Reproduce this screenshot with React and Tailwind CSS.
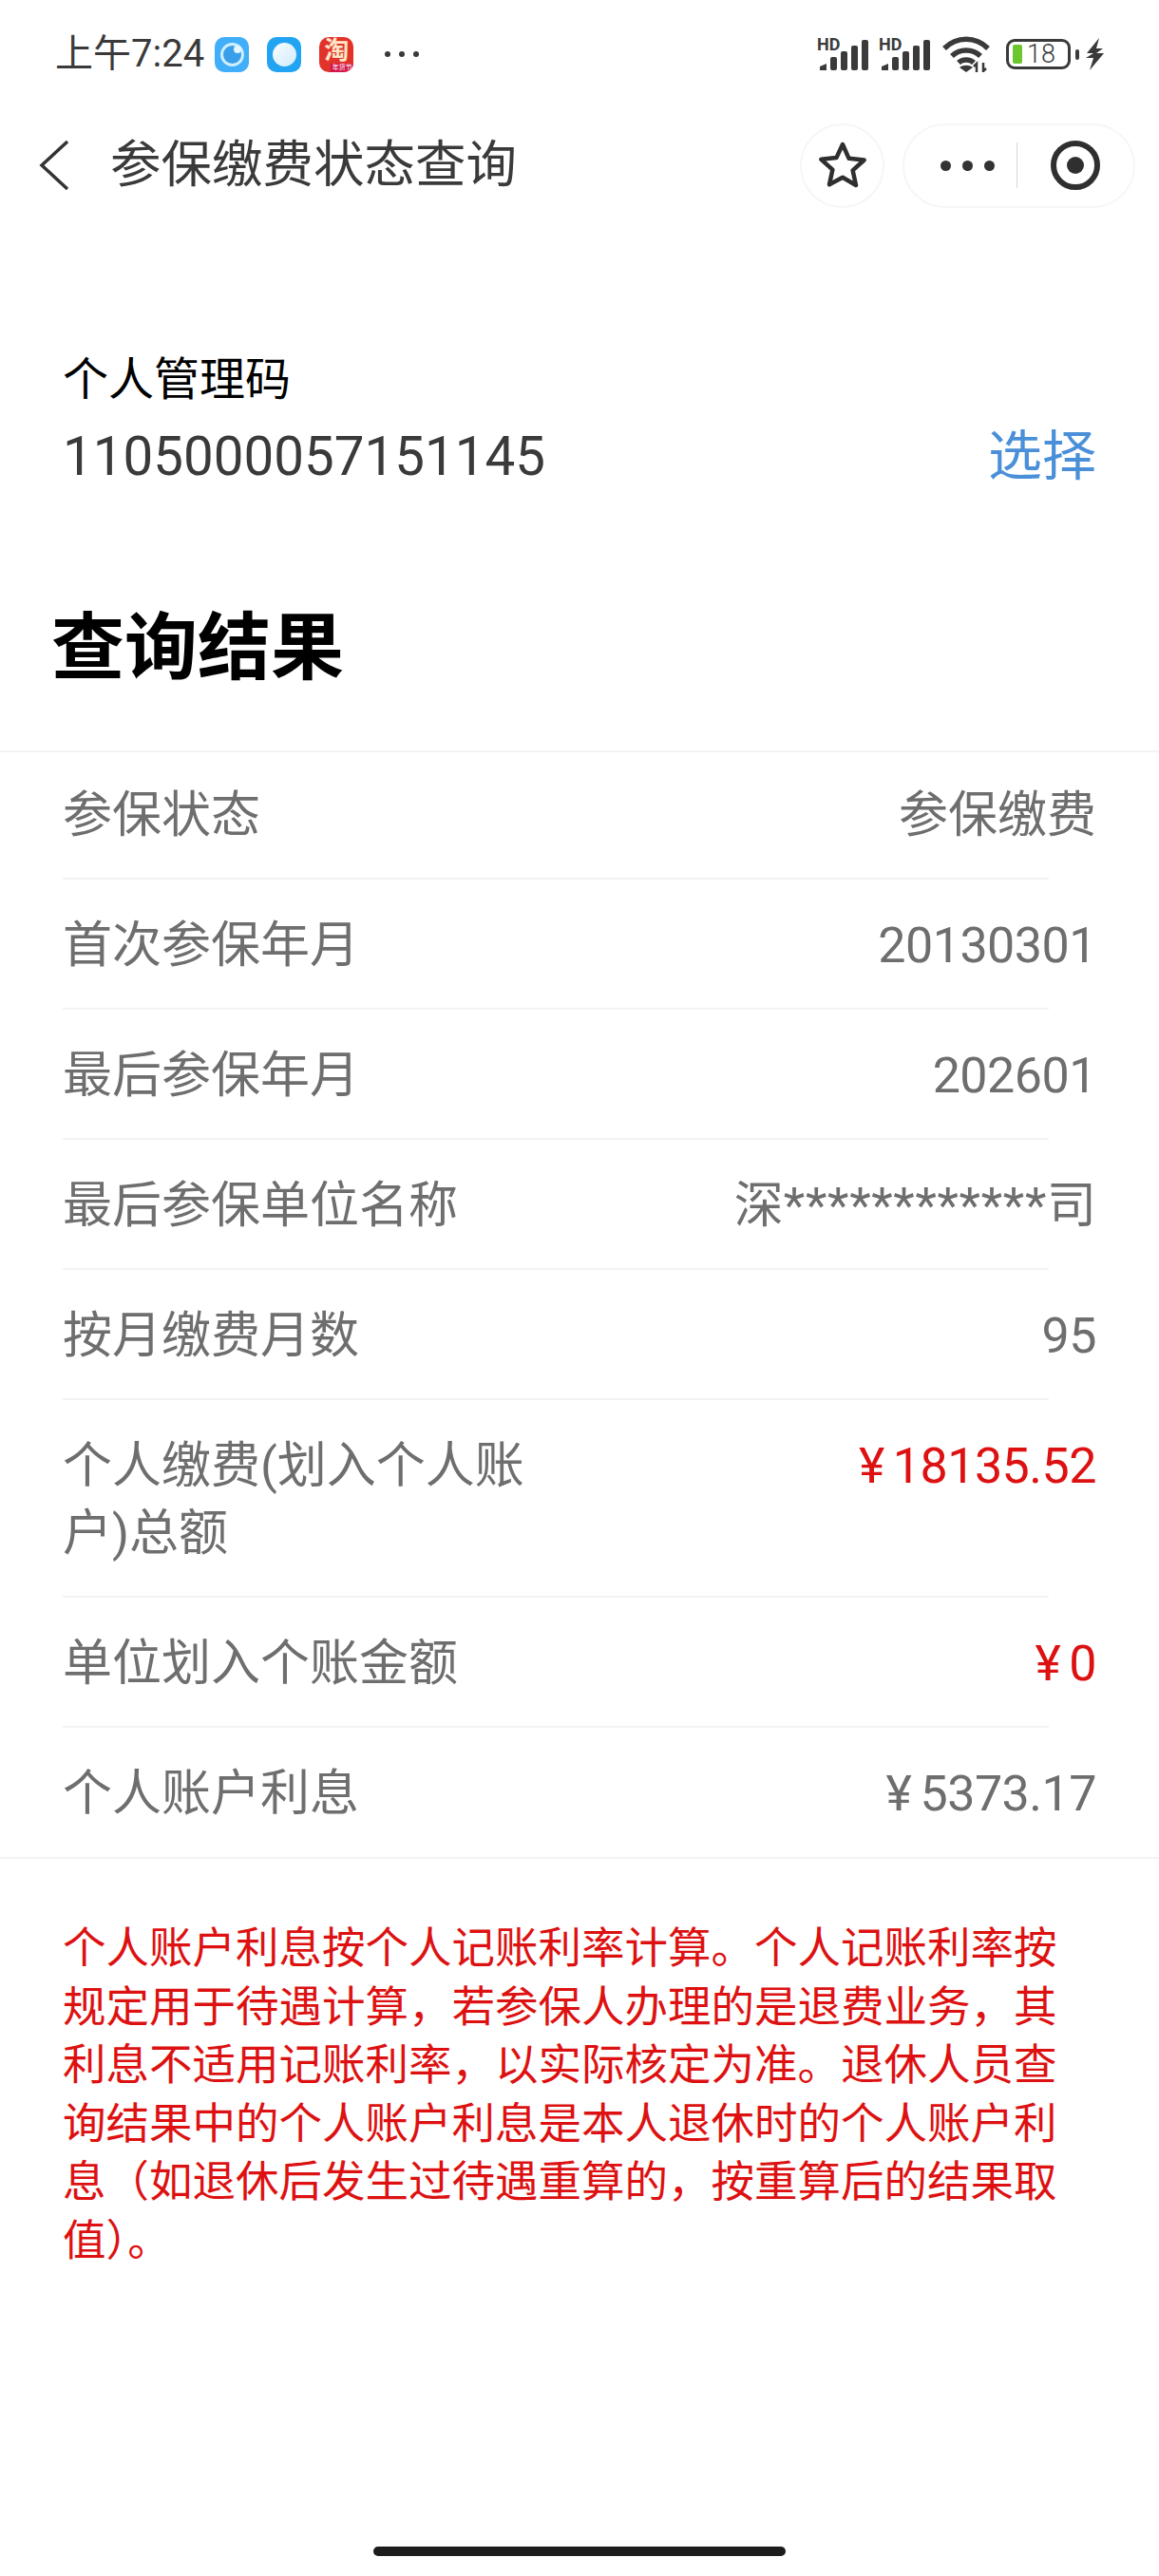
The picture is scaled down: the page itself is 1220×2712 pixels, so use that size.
import React from 'react';

const rows = [
  { label: '参保状态', value: '参保缴费' },
  { label: '首次参保年月', value: '20130301', digits: true },
  { label: '最后参保年月', value: '202601', digits: true },
  {
    label: '最后参保单位名称',
    value: (
      <>
        深<span className="tracking-[0.7px]">************</span>司
      </>
    ),
  },
  { label: '按月缴费月数', value: '95', digits: true },
  { label: '个人缴费(划入个人账户)总额', yen: '18135.52', red: true },
  { label: '单位划入个账金额', yen: '0', red: true },
  { label: '个人账户利息', yen: '5373.17' },
];

const Signal = () => (
  <div className="relative w-[52px] h-[33px]">
    <span className="absolute left-[-3px] top-[-4px] text-[18px] leading-[20px] font-bold text-[#3a3a3a]">HD</span>
    <svg width="52" height="33" viewBox="0 0 52 33" fill="#3a3a3a" className="absolute left-0 top-0">
      <path d="M0 33v-4l7-3v7z" />
      <rect x="11" y="19" width="7" height="14" rx="2" />
      <rect x="22" y="13" width="7" height="20" rx="2" />
      <rect x="33" y="7" width="7" height="26" rx="2" />
      <rect x="44" y="1" width="7" height="32" rx="2" />
    </svg>
  </div>
);

const StatusBar = () => (
  <div className="h-[114px] flex items-center pl-[58px] pr-[58px]">
    <span className="text-[40px] leading-none text-[#3a3a3a]">上午7:24</span>
    <div className="ml-[11px] w-[36px] h-[37px] rounded-[10px] bg-[#41aef9] flex items-center justify-center">
      <div className="w-[25px] h-[25px] rounded-full border-[3px] border-[#cfeeff] bg-[#3a9fe8] flex items-start justify-end">
        <div className="w-[8px] h-[8px] rounded-full bg-[#e4f6ff]"></div>
      </div>
    </div>
    <div className="ml-[19px] w-[36px] h-[37px] rounded-[10px] bg-[#23a4f2] flex items-center justify-center">
      <div className="w-[25px] h-[25px] rounded-full rotate-45 bg-gradient-to-r from-[#f4fbff] to-[#d6edfb]"></div>
    </div>
    <div className="relative ml-[19px] w-[36px] h-[37px] rounded-[10px] bg-[#e2332b] overflow-hidden flex justify-center">
      <span className="text-[26px] leading-[28px] font-bold text-[#ffe6c8]">淘</span>
      <div className="absolute left-[12px] right-0 bottom-0 h-[9px] bg-[#d3154a] flex items-center justify-center">
        <span className="text-[7px] leading-[9px] text-white">年货节</span>
      </div>
    </div>
    <div className="ml-[33px] flex gap-[9px]">
      <div className="w-[6px] h-[6px] rounded-full bg-[#3a3a3a]"></div>
      <div className="w-[6px] h-[6px] rounded-full bg-[#3a3a3a]"></div>
      <div className="w-[6px] h-[6px] rounded-full bg-[#3a3a3a]"></div>
    </div>
    <div className="ml-auto flex items-center">
      <Signal />
      <div className="ml-[13px]"><Signal /></div>
      <svg width="50" height="38" viewBox="0 0 50 38" fill="none" stroke="#3a3a3a" strokeWidth="5.5" className="ml-[12px]">
        <path d="M2 13C15 0 35 0 48 13" />
        <path d="M10 21C18 13 32 13 40 21" />
        <path d="M17 28C21 24 29 24 33 28" />
        <path d="M25 38l-7-5c4-3 10-3 14 0z" fill="#3a3a3a" stroke="none" />
        <path d="M36 38v-9l-3 3M43 28v9l3-3" strokeWidth="2.500" />
      </svg>
      <div className="ml-[17px] w-[68px] h-[32px] rounded-[9px] border-[3px] border-[#3a3a3a] flex items-center pl-[4px]">
        <div className="w-[10px] h-[20px] rounded-[2px] bg-[#6cc62e]"></div>
        <span className="ml-[5px] text-[27px] leading-none font-light text-[#3a3a3a]">18</span>
      </div>
      <div className="ml-[5px] w-[4px] h-[11px] rounded-[2px] bg-[#3a3a3a]"></div>
      <svg width="19" height="34" viewBox="0 0 19 34" fill="#3a3a3a" className="ml-[7px]">
        <path d="M14 0L1 16l7 0L0 21h8L4 34 19 16l-8 0 7-5h-7z" />
      </svg>
    </div>
  </div>
);

const NavBar = () => (
  <div className="h-[120px] flex items-center pl-[41px] pr-[25px]">
    <svg width="32" height="54" viewBox="0 0 32 54" fill="none" stroke="#333" strokeWidth="3.5">
      <path d="M30 2L3 27l27 25" />
    </svg>
    <span className="ml-[43px] text-[53.500px] leading-none font-normal text-[#3a3a3a]">参保缴费状态查询</span>
    <div className="ml-auto w-[89px] h-[89px] rounded-full border-2 border-[#f6f6f6] flex items-center justify-center">
      <svg width="50" height="50" viewBox="0 0 50 50" fill="none" stroke="#2f2f2f" strokeWidth="4.5" strokeLinejoin="round">
        <path d="M25 3l6.6 14.8 16 1.700-12 10.800 3.400 15.700L25 37.700 11 45.300l3.400-15.700-12-10.800 16-1.700z" />
      </svg>
    </div>
    <div className="ml-[19px] w-[245px] h-[89px] rounded-full border-2 border-[#f6f6f6] flex items-center pl-[38px]">
      <div className="flex gap-[12px]">
        <div className="w-[11px] h-[11px] rounded-full bg-[#333]"></div>
        <div className="w-[11px] h-[11px] rounded-full bg-[#333]"></div>
        <div className="w-[11px] h-[11px] rounded-full bg-[#333]"></div>
      </div>
      <div className="ml-[23px] w-px h-[48px] bg-[#d8d8d8]"></div>
      <div className="ml-[35px] w-[52px] h-[52px] rounded-full border-[6px] border-[#2f2f2f] flex items-center justify-center">
        <div className="w-[18px] h-[18px] rounded-full bg-[#2f2f2f]"></div>
      </div>
    </div>
  </div>
);

const Row = ({ row, first, last }) => (
  <div>
    <div className={`flex justify-between items-start px-[66px] ${first ? 'pt-[31px]' : 'pt-[34px]'} ${last ? 'pb-[31px]' : 'pb-[30px]'}`}>
      <div className="w-[500px] text-[52px] leading-[71px] text-[#6e6e6e]">{row.label}</div>
      {row.yen ? (
        <div className={`text-[52px] leading-[71px] tracking-[-0.5px] ${row.red ? 'text-[#dd1111]' : 'text-[#6e6e6e]'}`}>
          <span className="mr-[9px]">¥</span>{row.yen}
        </div>
      ) : (
        <div className={`text-[52px] leading-[71px] text-[#6e6e6e] ${row.digits ? 'tracking-[-0.5px]' : ''}`}>{row.value}</div>
      )}
    </div>
    {!last && <div className="ml-[66px] w-[1038px] h-[2px] bg-[#f3f3f3]"></div>}
  </div>
);

export default function App() {
  return (
    <div className="min-h-[2712px] bg-white flex flex-col font-['Roboto','Noto_Sans_CJK_SC',sans-serif]">
      <StatusBar />
      <NavBar />

      <div className="mt-[136px] px-[66px]">
        <div className="text-[48px] leading-[60px] text-black">个人管理码</div>
        <div className="mt-[11px] flex justify-between items-center">
          <span className="text-[56.500px] leading-[80px] text-[#3a3a3a]">1105000057151145</span>
          <span className="text-[57px] leading-[80px] text-[#4a90d9]">选择</span>
        </div>
      </div>

      <h1 className="mt-[112px] ml-[54px] text-[77px] leading-[100px] font-bold text-black">查询结果</h1>

      <div className="mt-[57px] border-y-2 border-[#f3f3f3]">
        {rows.map((row, i) => (
          <Row key={row.label} row={row} first={i === 0} last={i === rows.length - 1} />
        ))}
      </div>

      <p className="mt-[64px] ml-[66px] w-[1060px] text-[45.500px] leading-[61.500px] text-[#dd1111]">
        个人账户利息按个人记账利率计算。个人记账利率按规定用于待遇计算，若参保人办理的是退费业务，其利息不适用记账利率，以实际核定为准。退休人员查询结果中的个人账户利息是本人退休时的个人账户利息（如退休后发生过待遇重算的，按重算后的结果取值）。
      </p>

      <div className="mt-auto mb-[21px] mx-auto w-[434px] h-[10px] rounded-full bg-[#1c1c1c]"></div>
    </div>
  );
}
